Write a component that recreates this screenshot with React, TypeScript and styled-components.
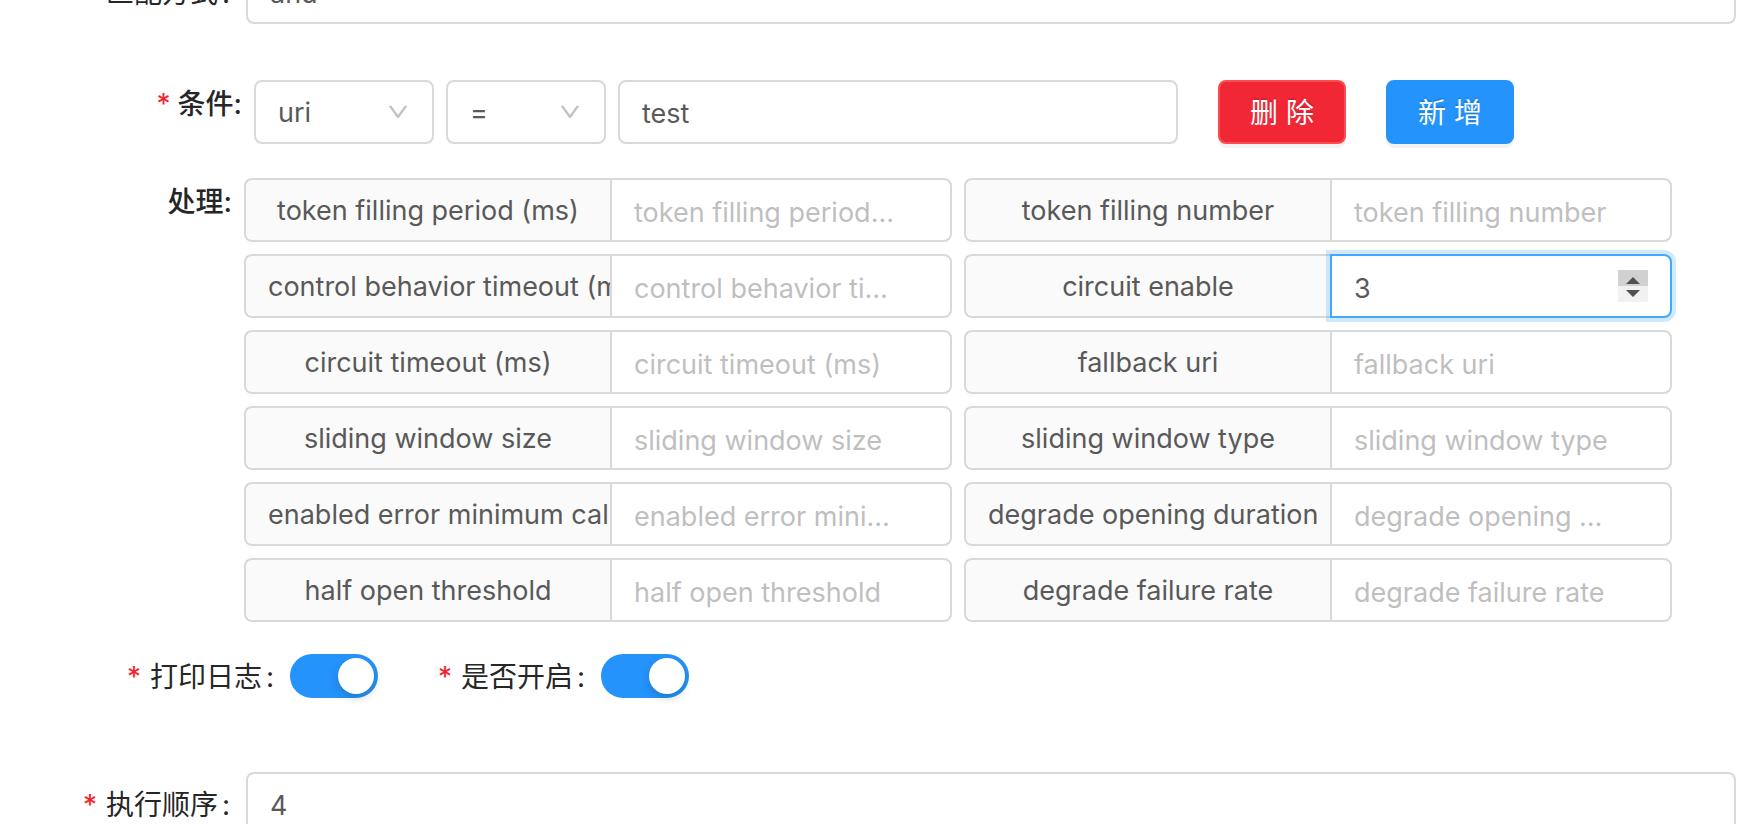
import { useState } from 'react'
import styled, { createGlobalStyle, css } from 'styled-components'
import { AiOutlineDown as DownIcon } from 'react-icons/ai'

const colors = {
    border: '#d9d9d9',
    text: '#595959',
    heading: '#262626',
    placeholder: '#bfbfbf',
    addon: '#fafafa',
    primary: '#2593fc',
    focus: '#40a9ff',
    danger: '#f22735',
    dangerBorder: '#ff4d4f',
    required: '#f5222d',
}

const GlobalStyle = createGlobalStyle`
    * {
        box-sizing: border-box;
    }

    body {
        margin: 0;
        background: white;
        overflow: hidden;
    }

    body, input, select, button {
        font-family: Inter, "Noto Sans CJK SC", sans-serif;
        font-size: 27px;
        color: ${colors.text};
    }
`

const Viewport = styled.main`
    height: 100vh;
    overflow: hidden;
`

// the form is scrolled part of the way through its first field
const Form = styled.form`
    display: flex;
    flex-direction: column;
    margin-top: -40px;
`

const Row = styled.div<{ $top?: number; $right?: number }>`
    display: flex;
    align-items: flex-start;
    margin-top: ${({ $top = 0 }) => $top}px;
    padding-right: ${({ $right = 4 }) => $right}px;
`

const Label = styled.label<{ $width?: number }>`
    display: flex;
    justify-content: flex-end;
    flex-shrink: 0;
    width: ${({ $width }) => ($width ? `${$width}px` : 'auto')};
    padding: 2px 16px 0 0;
    font-size: 28px;
    line-height: 62px;
    color: ${colors.heading};
    white-space: nowrap;
`

const Required = styled.span`
    margin-right: 9px;
    font-weight: 400;
    color: ${colors.required};
`

const SectionLabel = styled(Label)`
    padding-right: 12px;
    font-weight: 500;
    line-height: 44px;

    ${Required} {
        margin-right: 7px;
    }
`

const Colon = styled.span`
    margin-left: 4px;
`

const field = css`
    height: 64px;
    min-width: 0;
    border: 2px solid ${colors.border};
    border-radius: 8px;
    background: white;
    outline: none;
`

const TextInput = styled.input`
    ${field}
    flex: 1;
    padding: 2px 22px 0;
`

const ConditionFields = styled.div`
    display: flex;
    flex: 1;
    gap: 12px;
`

const SelectBox = styled.div<{ $width: number }>`
    position: relative;
    width: ${({ $width }) => $width}px;

    select {
        ${field}
        width: 100%;
        padding: 0 22px;
        appearance: none;
    }

    svg {
        position: absolute;
        top: 20px;
        right: 24px;
        color: ${colors.placeholder};
        stroke-width: 20px;
        pointer-events: none;
    }
`

const Button = styled.button<{ $danger?: boolean }>`
    width: 128px;
    height: 64px;
    margin-left: 40px;
    padding: 0 0 2px;
    border: 2px solid ${({ $danger }) => ($danger ? colors.dangerBorder : colors.primary)};
    border-radius: 8px;
    background: ${({ $danger }) => ($danger ? colors.danger : colors.primary)};
    box-shadow: 0 4px 0 rgb(0 0 0 / 5%);
    font-size: 28px;
    color: white;
    text-shadow: 0 -2px 0 rgb(0 0 0 / 12%);
    cursor: pointer;
`

const HandleGrid = styled.div`
    display: grid;
    flex: 1;
    grid-template-columns: 1fr 1fr;
    gap: 12px;
`

const InputGroup = styled.div`
    display: flex;
    min-width: 0;
`

const Addon = styled.label`
    display: flex;
    width: 366px;
    height: 64px;
    padding-left: 22px;
    border: 2px solid ${colors.border};
    border-right: none;
    border-radius: 8px 0 0 8px;
    background: ${colors.addon};
    line-height: 62px;
    white-space: nowrap;
    overflow: hidden;

    span {
        margin: 0 auto;
        padding-right: 22px;
    }
`

const spinner = `<svg xmlns='http://www.w3.org/2000/svg' width='30' height='32'><path fill='%23d1d1d1' d='M0 0h30v16H0z'/><path fill='%23f1f1f1' d='M0 16h30v16H0z'/><path fill='%23505050' d='M8 14l7-7 7 7zM8 20h14l-7 7z'/></svg>`

const NumberInput = styled.input<{ $active?: boolean }>`
    ${field}
    flex: 1;
    padding: 4px 22px 0;
    border-radius: 0 8px 8px 0;
    text-overflow: ellipsis;

    &::placeholder {
        color: ${colors.placeholder};
        opacity: 1;
        text-overflow: ellipsis;
    }

    &::-webkit-inner-spin-button {
        appearance: none;
        width: 30px;
        height: 32px;
        margin: 0 0 4px;
        opacity: ${({ $active }) => ($active ? 1 : 0)};
        background: url("data:image/svg+xml;utf8,${spinner}") no-repeat;
    }

    ${({ $active }) => $active && css`
        border-color: ${colors.focus};
        box-shadow: 0 0 0 4px rgb(24 144 255 / 20%);
    `}
`

const SwitchItem = styled.div`
    display: flex;
    align-items: center;
    margin-right: 60px;

    ${Label} {
        line-height: 42px;
    }
`

const Switch = styled.input`
    display: flex;
    align-items: center;
    width: 88px;
    height: 44px;
    margin: 0;
    padding: 4px;
    border-radius: 22px;
    background: ${colors.placeholder};
    appearance: none;
    cursor: pointer;

    &::before {
        content: '';
        width: 36px;
        height: 36px;
        border-radius: 50%;
        background: white;
        box-shadow: 0 4px 8px rgb(0 35 11 / 20%);
    }

    &:checked {
        justify-content: flex-end;
        background: ${colors.primary};
    }
`

const handleFields = [
    'token filling period (ms)',
    'token filling number',
    'control behavior timeout (ms)',
    'circuit enable',
    'circuit timeout (ms)',
    'fallback uri',
    'sliding window size',
    'sliding window type',
    'enabled error minimum calls',
    'degrade opening duration',
    'half open threshold',
    'degrade failure rate',
]

const toId = (name: string) => name.replace(/[^a-z]+/g, '-')

export default () => {
    const [values, setValues] = useState<Record<string, string>>({ 'circuit enable': '3' })
    const [printLog, setPrintLog] = useState(true)
    const [enabled, setEnabled] = useState(true)

    return <Viewport>
        <GlobalStyle />
        <Form>
            <Row>
                <Label $width={246} htmlFor="match-mode">
                    <Required>*</Required>匹配方式<Colon>:</Colon>
                </Label>
                <TextInput id="match-mode" defaultValue="and" />
            </Row>

            <Row $top={56} $right={226}>
                <SectionLabel $width={254} htmlFor="condition-value">
                    <Required>*</Required>条件:
                </SectionLabel>
                <ConditionFields>
                    <SelectBox $width={180}>
                        <select aria-label="条件类型" defaultValue="uri">
                            <option>uri</option>
                        </select>
                        <DownIcon size={24} />
                    </SelectBox>
                    <SelectBox $width={160}>
                        <select aria-label="条件运算符" defaultValue="=">
                            <option>=</option>
                        </select>
                        <DownIcon size={24} />
                    </SelectBox>
                    <TextInput id="condition-value" defaultValue="test" />
                </ConditionFields>
                <Button type="button" $danger>删 除</Button>
                <Button type="button">新 增</Button>
            </Row>

            <Row $top={34} $right={68}>
                <SectionLabel as="span" $width={244}>处理:</SectionLabel>
                <HandleGrid>
                    {handleFields.map(name => (
                        <InputGroup key={name}>
                            <Addon htmlFor={toId(name)}><span>{name}</span></Addon>
                            <NumberInput
                                id={toId(name)}
                                type="number"
                                placeholder={name}
                                value={values[name] ?? ''}
                                onChange={e => setValues({ ...values, [name]: e.target.value })}
                                $active={name === 'circuit enable'}
                            />
                        </InputGroup>
                    ))}
                </HandleGrid>
            </Row>

            <Row $top={32}>
                <SwitchItem>
                    <Label $width={290} htmlFor="print-log">
                        <Required>*</Required>打印日志<Colon>:</Colon>
                    </Label>
                    <Switch
                        id="print-log"
                        type="checkbox"
                        role="switch"
                        checked={printLog}
                        onChange={e => setPrintLog(e.target.checked)}
                    />
                </SwitchItem>
                <SwitchItem>
                    <Label htmlFor="enabled">
                        <Required>*</Required>是否开启<Colon>:</Colon>
                    </Label>
                    <Switch
                        id="enabled"
                        type="checkbox"
                        role="switch"
                        checked={enabled}
                        onChange={e => setEnabled(e.target.checked)}
                    />
                </SwitchItem>
            </Row>

            <Row $top={74}>
                <Label $width={246} htmlFor="sort">
                    <Required>*</Required>执行顺序<Colon>:</Colon>
                </Label>
                <TextInput id="sort" defaultValue="4" />
            </Row>
        </Form>
    </Viewport>
}
